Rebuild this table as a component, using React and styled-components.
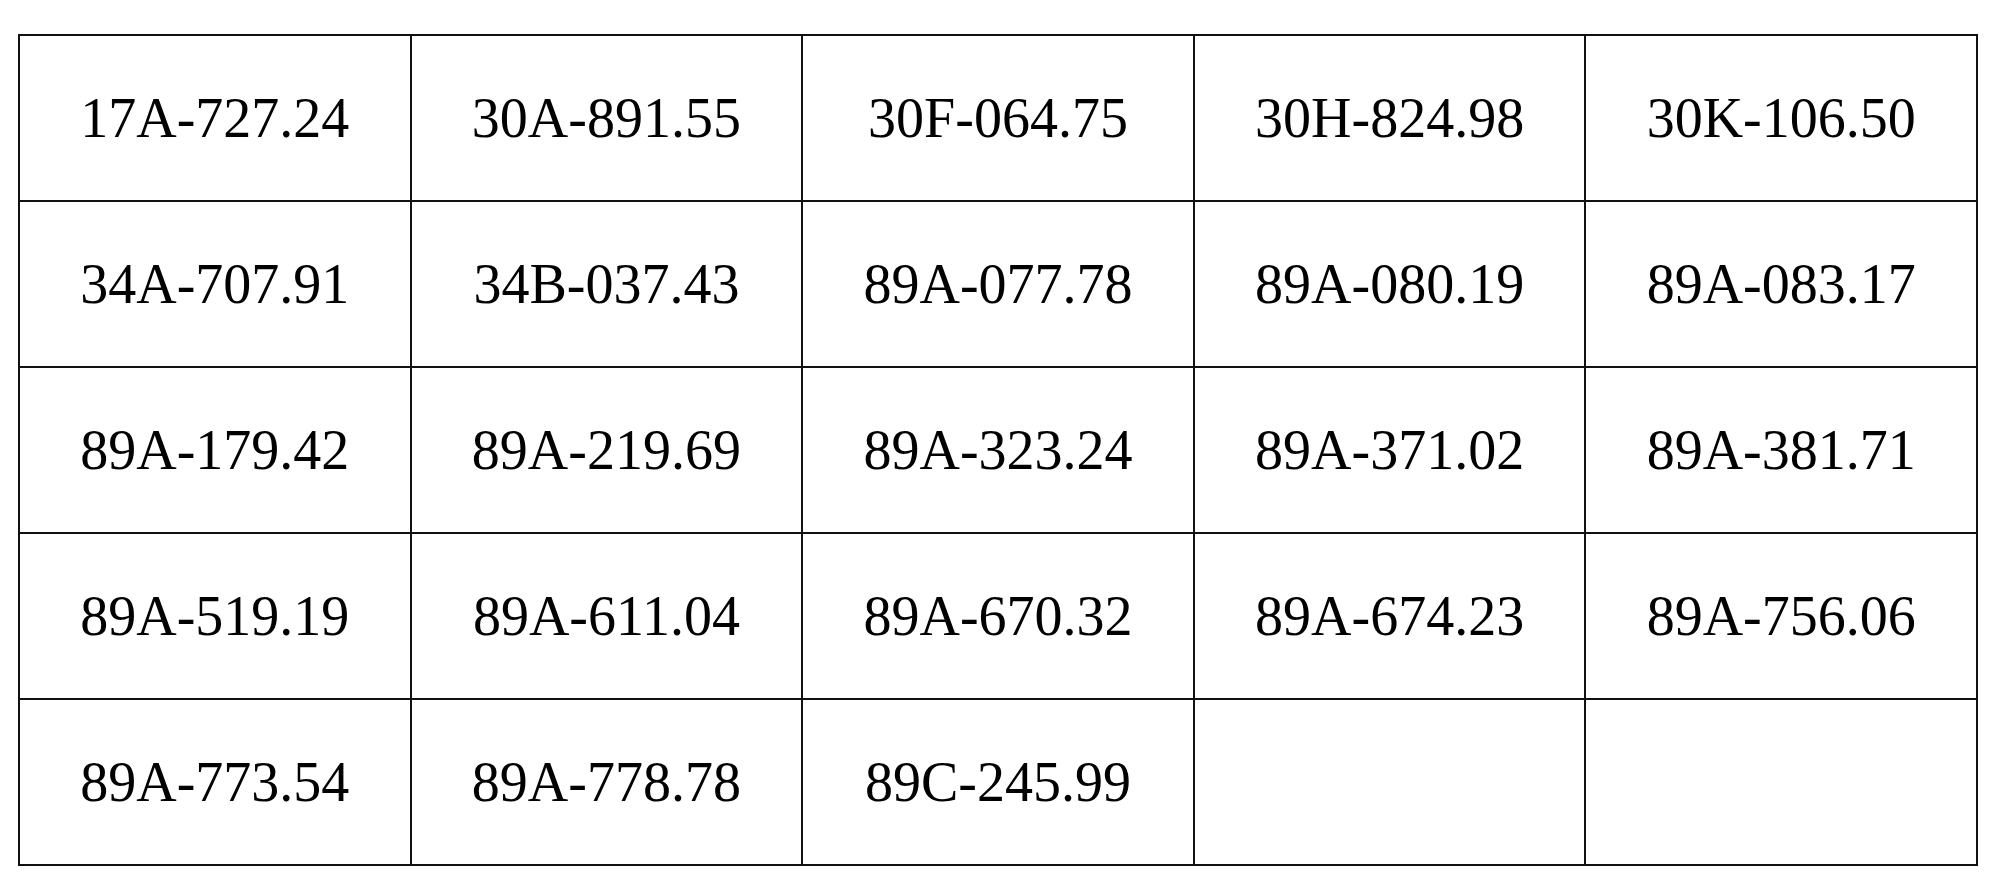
import React from 'react'
import styled, { createGlobalStyle } from 'styled-components'

const GlobalStyle = createGlobalStyle`
    html, body {
        margin: 0;
        padding: 0;
        background: #fff;
    }
`;

const Page = styled.div`
    width: 2000px;
    height: 893px;
    padding: 34px 0 0 18px;
    box-sizing: border-box;
`;

const Grid = styled.div`
    width: 1960px;
    display: grid;
    grid-template-columns: repeat(5, 1fr);
    grid-auto-rows: 166px;
    border-top: 2px solid #111;
    border-left: 2px solid #111;
    box-sizing: border-box;
`;

const Cell = styled.div`
    display: flex;
    align-items: center;
    justify-content: center;
    border-right: 2px solid #111;
    border-bottom: 2px solid #111;
    font-family: "Liberation Serif", "Times New Roman", serif;
    font-size: 56px;
    color: #000;
`;

const plates = [
  '17A-727.24', '30A-891.55', '30F-064.75', '30H-824.98', '30K-106.50',
  '34A-707.91', '34B-037.43', '89A-077.78', '89A-080.19', '89A-083.17',
  '89A-179.42', '89A-219.69', '89A-323.24', '89A-371.02', '89A-381.71',
  '89A-519.19', '89A-611.04', '89A-670.32', '89A-674.23', '89A-756.06',
  '89A-773.54', '89A-778.78', '89C-245.99', '', '',
];

const App = () => {
  return (
    <>
      <GlobalStyle />
      <Page>
        <Grid>
          {plates.map((p, i) => (
            <Cell key={i}>{p}</Cell>
          ))}
        </Grid>
      </Page>
    </>
  )
}

export default App
